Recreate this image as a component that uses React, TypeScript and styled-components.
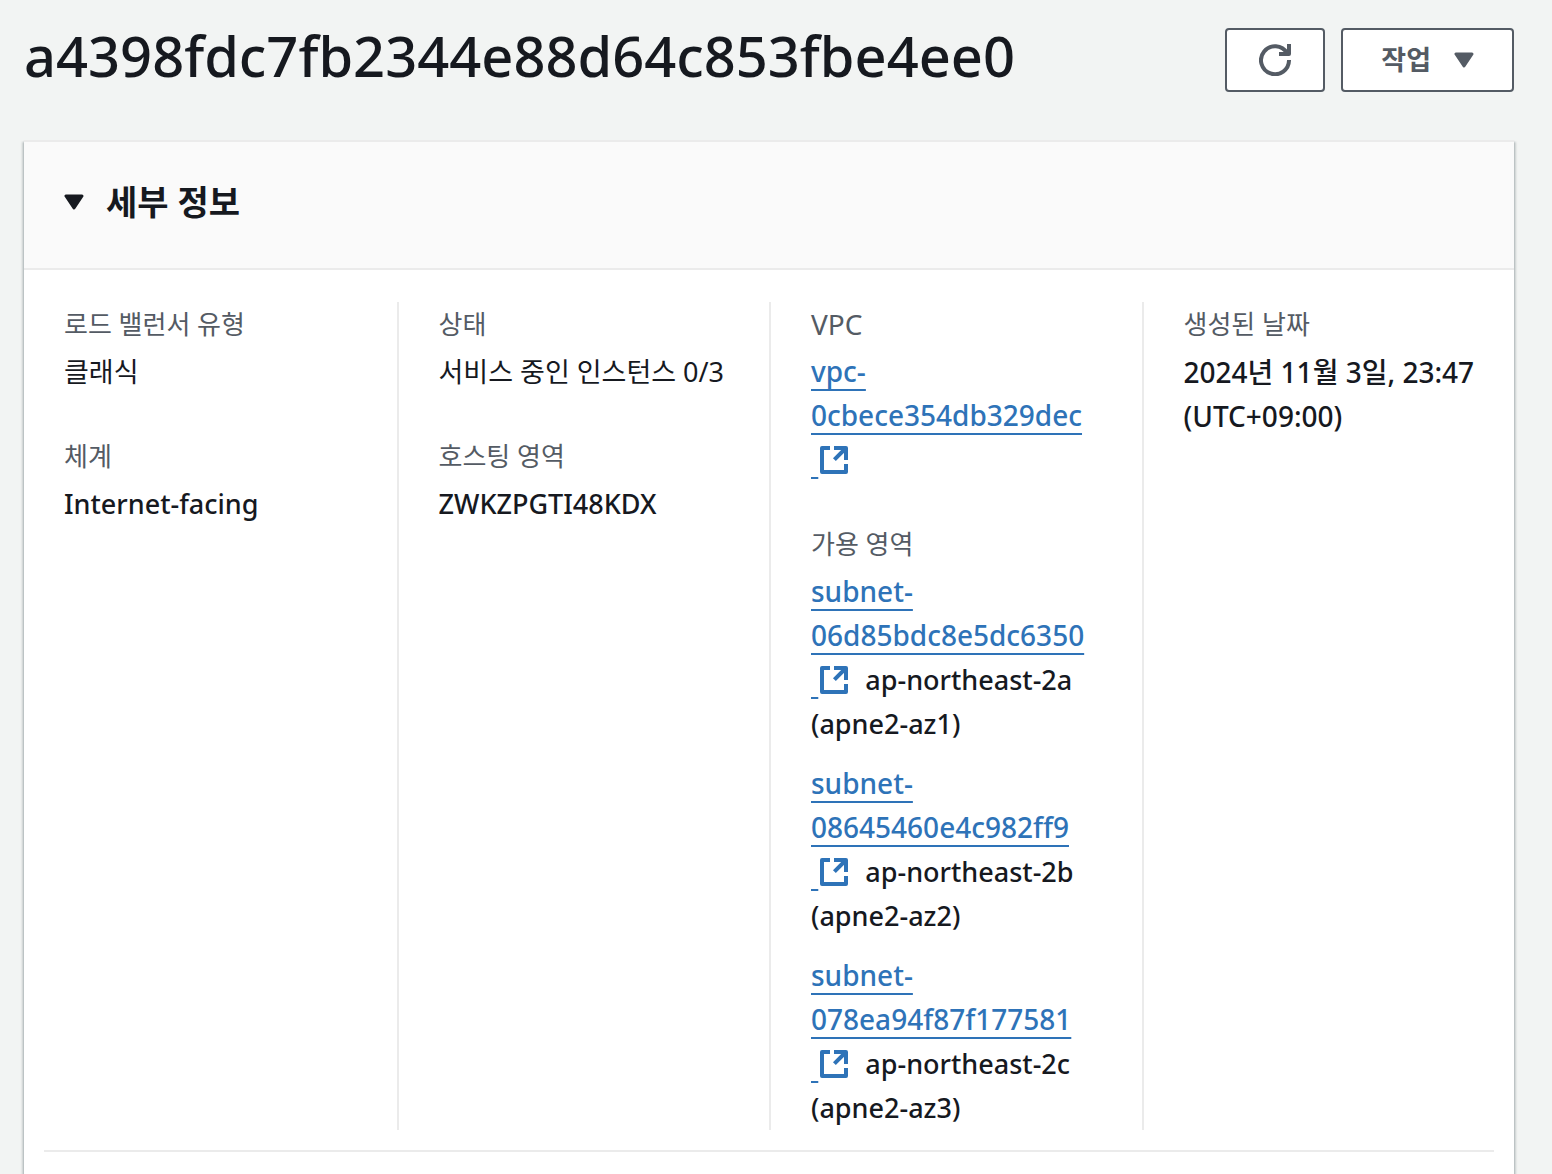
import React, { useState } from "react";
import styled, { createGlobalStyle } from "styled-components";

const color = {
  page: "#f2f4f3",
  text: "#16191f",
  muted: "#545b64",
  link: "#2e73b8",
  line: "#ebebeb",
  header: "#fafafa",
};

const GlobalStyle = createGlobalStyle`
  * { box-sizing: border-box; }
  body {
    margin: 0;
    background: ${color.page};
    color: ${color.text};
    font-family: "Noto Sans", "Noto Sans CJK KR", sans-serif;
    font-size: 28px;
    line-height: 44px;
  }
`;

const Page = styled.main`
  display: flex;
  flex-direction: column;
  gap: 48px;
  min-height: 100vh;
  padding: 28px 38px 0 24px;
`;

const TopBar = styled.header`
  display: flex;
  justify-content: space-between;
  gap: 24px;
`;

const Title = styled.h1`
  margin: 0;
  font-size: 56px;
  line-height: 54px;
  font-weight: 500;
`;

const Actions = styled.div`
  display: flex;
  gap: 16px;
`;

const Button = styled.button`
  display: flex;
  align-items: center;
  justify-content: center;
  gap: 23px;
  height: 64px;
  padding: 0 38px;
  border: 2px solid ${color.muted};
  border-radius: 4px;
  background: #fff;
  color: ${color.muted};
  font-family: inherit;
  font-size: 27px;
  font-weight: 700;
  cursor: pointer;
`;

const ButtonLabel = styled.span`
  padding-bottom: 4px;
`;

const IconButton = styled(Button)`
  width: 100px;
  padding: 0;
`;

const Panel = styled.section`
  flex: 1;
  border-top: 2px solid ${color.line};
  background: #fff;
  box-shadow:
    0 2px 2px 0 rgba(0, 28, 36, 0.3),
    2px 2px 2px 0 rgba(0, 28, 36, 0.15),
    -2px 2px 2px 0 rgba(0, 28, 36, 0.15);
`;

const PanelHeader = styled.h2`
  margin: 0;
  border-bottom: 2px solid ${color.line};
  background: ${color.header};
`;

const Toggle = styled.button`
  display: flex;
  align-items: center;
  gap: 22px;
  width: 100%;
  padding: 38px 40px 44px;
  border: 0;
  background: none;
  color: inherit;
  font-family: inherit;
  font-size: 34px;
  line-height: 44px;
  font-weight: 700;
  cursor: pointer;
`;

const Columns = styled.div`
  display: grid;
  grid-template-columns: repeat(4, minmax(0, 1fr));
  padding: 32px 0 20px;
`;

const Column = styled.dl`
  margin: 0;
  padding: 0 32px 0 40px;

  & + & {
    border-left: 2px solid ${color.line};
  }
`;

const Field = styled.div`
  & + & {
    margin-top: 40px;
  }
`;

const Label = styled.dt<{ $latin?: boolean }>`
  margin-bottom: 4px;
  color: ${color.muted};
  font-size: ${(p) => (p.$latin ? 28 : 26)}px;
`;

const Value = styled.dd<{ $large?: boolean; $regular?: boolean }>`
  margin: 0;
  font-size: ${(p) => (p.$large ? 28 : 27)}px;
  font-weight: ${(p) => (p.$regular ? 400 : 500)};

  & + & {
    margin-top: 16px;
  }
`;

const Link = styled.a`
  color: ${color.link};
  font-size: 28px;
  line-height: 40px;
  text-decoration: underline;
  text-decoration-thickness: 2px;
  text-underline-offset: 7px;
  text-decoration-skip-ink: none;
`;

const LinkIcon = styled.svg`
  width: 32px;
  height: 32px;
  vertical-align: -6px;
`;

const Zone = styled.span`
  margin-left: 8px;
`;

const Divider = styled.hr`
  margin: 0 20px;
  border: 0;
  border-top: 2px solid ${color.line};
`;

const Caret = ({ collapsed }: { collapsed?: boolean }) => (
  <svg width="20" height="16" viewBox="0 0 20 16" aria-hidden="true">
    <path
      d="M10 14L2 2h16z"
      transform={collapsed ? "rotate(-90 10 8)" : undefined}
      fill="currentColor"
      stroke="currentColor"
      strokeWidth="3"
      strokeLinejoin="round"
    />
  </svg>
);

const RefreshIcon = () => (
  <svg width="32" height="32" viewBox="0 0 32 32" fill="none" stroke="currentColor" strokeWidth="4" strokeLinejoin="round" aria-hidden="true">
    <path d="M30 16A14 14 0 1 1 28 9" />
    <path d="M30 0v10H20" />
  </svg>
);

const ExternalLink = ({ id }: { id: string }) => (
  <Link href={`#${id}`}>
    {id}
    <br />
    {"\u00a0"}
    <LinkIcon viewBox="0 0 16 16" fill="none" stroke="currentColor" strokeWidth="2" strokeLinejoin="round" aria-hidden="true">
      <path d="M6 2H2v12h12v-4M8 2h6v6M14 2L8.2 7.8" />
    </LinkIcon>
  </Link>
);

const subnets = [
  { id: "subnet-06d85bdc8e5dc6350", zone: "ap-northeast-2a (apne2-az1)" },
  { id: "subnet-08645460e4c982ff9", zone: "ap-northeast-2b (apne2-az2)" },
  { id: "subnet-078ea94f87f177581", zone: "ap-northeast-2c (apne2-az3)" },
];

export default function App() {
  const [open, setOpen] = useState(true);

  return (
    <>
      <GlobalStyle />
      <Page lang="ko">
        <TopBar>
          <Title>a4398fdc7fb2344e88d64c853fbe4ee0</Title>
          <Actions>
            <IconButton type="button" aria-label="새로 고침">
              <RefreshIcon />
            </IconButton>
            <Button type="button" aria-haspopup="menu">
              <ButtonLabel>작업</ButtonLabel>
              <Caret />
            </Button>
          </Actions>
        </TopBar>
        <Panel>
          <PanelHeader>
            <Toggle type="button" aria-expanded={open} onClick={() => setOpen(!open)}>
              <Caret collapsed={!open} />
              세부 정보
            </Toggle>
          </PanelHeader>
          {open && (
            <>
              <Columns>
                <Column>
                  <Field>
                    <Label>로드 밸런서 유형</Label>
                    <Value $regular>클래식</Value>
                  </Field>
                  <Field>
                    <Label>체계</Label>
                    <Value>Internet-facing</Value>
                  </Field>
                </Column>
                <Column>
                  <Field>
                    <Label>상태</Label>
                    <Value $regular>서비스 중인 인스턴스 0/3</Value>
                  </Field>
                  <Field>
                    <Label>호스팅 영역</Label>
                    <Value>ZWKZPGTI48KDX</Value>
                  </Field>
                </Column>
                <Column>
                  <Field>
                    <Label $latin>VPC</Label>
                    <Value>
                      <ExternalLink id="vpc-0cbece354db329dec" />
                    </Value>
                  </Field>
                  <Field>
                    <Label>가용 영역</Label>
                    {subnets.map((s) => (
                      <Value key={s.id}>
                        <ExternalLink id={s.id} /> <Zone>{s.zone}</Zone>
                      </Value>
                    ))}
                  </Field>
                </Column>
                <Column>
                  <Field>
                    <Label>생성된 날짜</Label>
                    <Value $large>2024년 11월 3일, 23:47 (UTC+09:00)</Value>
                  </Field>
                </Column>
              </Columns>
              <Divider />
            </>
          )}
        </Panel>
      </Page>
    </>
  );
}
